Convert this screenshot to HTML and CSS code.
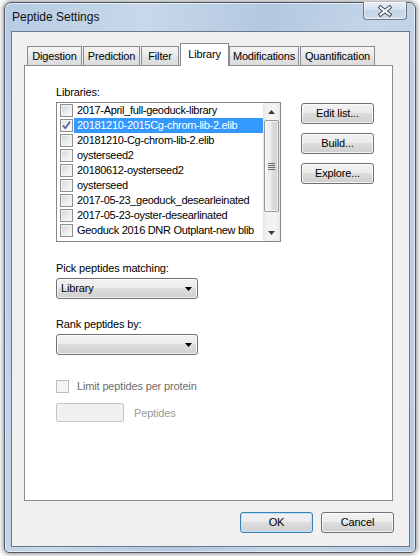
FILE: index.html
```html
<!DOCTYPE html>
<html>
<head>
<meta charset="utf-8">
<link rel="stylesheet" href="styles.css">
</head>
<body>
<div class="window">
  <div class="titlebar">
    <span class="title">Peptide Settings</span>
    <div class="close">
      <svg width="16" height="12" viewBox="0 0 16 12">
        <path d="M3.5 2.5 L12.5 9.5 M12.5 2.5 L3.5 9.5" stroke="#3b4858" stroke-width="4" stroke-linecap="square" fill="none"/>
        <path d="M3.5 2.5 L12.5 9.5 M12.5 2.5 L3.5 9.5" stroke="#ffffff" stroke-width="2" stroke-linecap="square" fill="none"/>
      </svg>
    </div>
  </div>
  <div class="client">
    <div class="tabs">
      <div class="tab t-dig">Digestion</div>
      <div class="tab t-pred">Prediction</div>
      <div class="tab t-filter">Filter</div>
      <div class="tab tab-active t-lib">Library</div>
      <div class="tab t-mod">Modifications</div>
      <div class="tab t-quant">Quantification</div>
    </div>
    <div class="panel">
      <div class="label lbl-libs">Libraries:</div>
      <div class="lib-row">
        <div class="listbox">
          <div class="items">
            <div class="item"><span class="cb"></span><span class="txt">2017-April_full-geoduck-library</span></div>
            <div class="item"><span class="cb cb-checked"><svg width="11" height="11" viewBox="0 0 11 11"><path d="M2 5.5 L4.3 8.3 L9 1.8" stroke="#4a5e8c" stroke-width="1.6" fill="none"/></svg></span><span class="txt selected">20181210-2015Cg-chrom-lib-2.elib</span></div>
            <div class="item"><span class="cb"></span><span class="txt">20181210-Cg-chrom-lib-2.elib</span></div>
            <div class="item"><span class="cb"></span><span class="txt">oysterseed2</span></div>
            <div class="item"><span class="cb"></span><span class="txt">20180612-oysterseed2</span></div>
            <div class="item"><span class="cb"></span><span class="txt">oysterseed</span></div>
            <div class="item"><span class="cb"></span><span class="txt">2017-05-23_geoduck_desearleinated</span></div>
            <div class="item"><span class="cb"></span><span class="txt">2017-05-23-oyster-desearlinated</span></div>
            <div class="item"><span class="cb"></span><span class="txt">Geoduck 2016 DNR Outplant-new blib</span></div>
          </div>
          <div class="scrollbar">
            <div class="sb-arrow"><svg width="7" height="4" viewBox="0 0 7 4"><path d="M0 4 L3.5 0 L7 4 Z" fill="#3c3c3c"/></svg></div>
            <div class="sb-thumb"><svg width="7" height="7" viewBox="0 0 7 7"><path d="M0 0.5 H7 M0 2.5 H7 M0 4.5 H7 M0 6.5 H7" stroke="#6a6a6a" stroke-width="1"/></svg></div>
            <div class="sb-space"></div>
            <div class="sb-arrow"><svg width="7" height="4" viewBox="0 0 7 4"><path d="M0 0 L3.5 4 L7 0 Z" fill="#3c3c3c"/></svg></div>
          </div>
        </div>
        <div class="side-buttons">
          <div class="btn">Edit list...</div>
          <div class="btn">Build...</div>
          <div class="btn">Explore...</div>
        </div>
      </div>
      <div class="label lbl-pick">Pick peptides matching:</div>
      <div class="combo"><span class="combo-text">Library</span><svg width="7" height="4" viewBox="0 0 7 4"><path d="M0 0 L3.5 4 L7 0 Z" fill="#000"/></svg></div>
      <div class="label lbl-rank">Rank peptides by:</div>
      <div class="combo"><span class="combo-text"></span><svg width="7" height="4" viewBox="0 0 7 4"><path d="M0 0 L3.5 4 L7 0 Z" fill="#000"/></svg></div>
      <div class="limit-row">
        <span class="cb cb-disabled"></span>
        <span class="limit-text">Limit peptides per protein</span>
      </div>
      <div class="peptides-row">
        <div class="textbox"></div>
        <span class="peptides-text">Peptides</span>
      </div>
    </div>
    <div class="footer">
      <div class="btn btn-default">OK</div>
      <div class="btn">Cancel</div>
    </div>
  </div>
</div>
</body>
</html>
```
FILE: styles.css
```css
html, body {
  margin: 0;
  padding: 0;
  background: #ffffff;
}
body {
  font-family: "Liberation Sans", Arial, sans-serif;
  font-size: 11px;
  letter-spacing: -0.15px;
  color: #000;
  height: 556px;
  overflow: hidden;
}
.window {
  margin: 2px 0 0 4px;
  width: 412px;
  height: 551px;
  box-sizing: border-box;
  border: 1px solid #4f5967;
  border-radius: 7px 7px 5px 5px;
  background: linear-gradient(100deg, #b6cbe3 0%, #c8d8ea 28%, #b3c8e0 52%, #c4d5e8 74%, #b7cce3 100%);
  box-shadow: 0 0 5px 1px rgba(0,0,0,0.45), inset 0 0 0 1px rgba(255,255,255,0.55);
  padding: 0 5px 5px 6px;
  display: flex;
  flex-direction: column;
}
.titlebar {
  height: 28px;
  flex: none;
  display: flex;
  justify-content: space-between;
  align-items: flex-start;
}
.title {
  font-family: "Liberation Sans", Arial, sans-serif;
  font-size: 12px;
  letter-spacing: 0;
  line-height: 15px;
  padding: 7px 0 0 1px;
  color: #111;
}
.close {
  width: 44px;
  height: 18px;
  box-sizing: border-box;
  margin: -1px 3px 0 0;
  border: 1px solid rgba(70,82,100,0.75);
  border-top: none;
  border-radius: 0 0 4px 4px;
  background: linear-gradient(#e7edf5 0%, #d6e1ee 45%, #c4d3e5 50%, #d0ddec 100%);
  box-shadow: inset 0 0 0 1px rgba(255,255,255,0.5);
  display: flex;
  align-items: center;
  justify-content: center;
}
.client {
  flex: 1;
  border: 1px solid #6b7888;
  background: #f0f0f0;
  padding: 11px 16px 0 12px;
  display: flex;
  flex-direction: column;
}
.tabs {
  display: flex;
  align-items: flex-end;
  height: 22px;
  padding-left: 3px;
  flex: none;
}
.tab {
  box-sizing: border-box;
  height: 19px;
  border: 1px solid #898c95;
  border-bottom: none;
  background: linear-gradient(#f4f4f4 0%, #ececec 45%, #e3e3e3 55%, #dcdcdc 100%);
  text-align: center;
  line-height: 18px;
  margin-left: 1px;
}
.t-dig { width: 55px; margin-left: 0; }
.t-pred { width: 57px; }
.t-filter { width: 38px; }
.t-lib { width: 49px; }
.t-mod { width: 70px; margin-left: 0; }
.t-quant { width: 75px; }
.tab-active {
  position: relative;
  z-index: 1;
  height: 23px;
  margin-bottom: -1px;
  background: #ffffff;
  line-height: 20px;
}
.panel {
  box-sizing: border-box;
  height: 436px;
  flex: none;
  border: 1px solid #898c95;
  background: #ffffff;
  padding: 0 0 0 31px;
  display: flex;
  flex-direction: column;
  align-items: flex-start;
}
.label {
  line-height: 13px;
}
.lbl-libs { margin: 20px 0 3px; }
.lbl-pick { margin: 20px 0 3px; }
.lbl-rank { margin: 19px 0 3px; }
.lib-row {
  display: flex;
  align-items: flex-start;
  gap: 20px;
}
.listbox {
  box-sizing: border-box;
  width: 225px;
  height: 140px;
  border: 1px solid #828790;
  display: flex;
  background: #fff;
}
.items {
  flex: 1;
  min-width: 0;
  display: flex;
  flex-direction: column;
}
.item {
  height: 15px;
  display: flex;
  align-items: center;
  padding-left: 3px;
}
.cb {
  box-sizing: border-box;
  width: 13px;
  height: 13px;
  flex: none;
  border: 1px solid #8e8f8f;
  background: linear-gradient(135deg, #d3d5d9 0%, #eeeeee 60%, #fbfbfb 100%);
  box-shadow: inset 0 0 0 1px #f4f4f4;
  display: flex;
  align-items: center;
  justify-content: center;
}
.cb-checked {
  background: linear-gradient(135deg, #e2e4e8 0%, #f4f4f4 60%, #ffffff 100%);
}
.txt {
  flex: 1;
  margin-left: 1px;
  padding: 0 3px;
  line-height: 15px;
  letter-spacing: -0.3px;
  white-space: nowrap;
  overflow: hidden;
}
.selected {
  background: #3399ff;
  color: #ffffff;
}
.scrollbar {
  width: 17px;
  flex: none;
  display: flex;
  flex-direction: column;
  align-items: center;
  background: linear-gradient(to right, #e6e6e6 0%, #f2f2f2 25%, #f2f2f2 75%, #e6e6e6 100%);
}
.sb-arrow {
  height: 17px;
  width: 17px;
  flex: none;
  display: flex;
  align-items: center;
  justify-content: center;
}
.sb-thumb {
  box-sizing: border-box;
  width: 15px;
  height: 92px;
  flex: none;
  border: 1px solid #979797;
  border-radius: 2px;
  background: linear-gradient(to right, #f4f4f4 0%, #ececec 45%, #dcdcdc 55%, #d2d2d2 100%);
  box-shadow: inset 0 0 0 1px rgba(255,255,255,0.7);
  display: flex;
  align-items: center;
  justify-content: center;
}
.sb-space {
  flex: 1;
}
.side-buttons {
  display: flex;
  flex-direction: column;
  gap: 9px;
  padding-top: 1px;
}
.btn {
  box-sizing: border-box;
  width: 73px;
  height: 21px;
  border: 1px solid #707070;
  border-radius: 3px;
  background: linear-gradient(#f2f2f2 0%, #ebebeb 49%, #dddddd 50%, #cfcfcf 100%);
  box-shadow: inset 0 0 0 1px rgba(255,255,255,0.75);
  text-align: center;
  line-height: 19px;
}
.btn-default {
  border-color: #3c7fb1;
  box-shadow: inset 0 0 0 1px #b8e3f8;
}
.combo {
  box-sizing: border-box;
  width: 142px;
  height: 21px;
  border: 1px solid #707070;
  border-radius: 3px;
  background: linear-gradient(#f2f2f2 0%, #ebebeb 49%, #dddddd 50%, #cfcfcf 100%);
  box-shadow: inset 0 0 0 1px rgba(255,255,255,0.75);
  display: flex;
  align-items: center;
  padding: 0 5px 0 4px;
}
.combo-text {
  flex: 1;
  line-height: 19px;
}
.limit-row {
  margin-top: 25px;
  display: flex;
  align-items: center;
  height: 13px;
}
.cb-disabled {
  border-color: #bcbcbc;
  background: #f4f4f4;
  box-shadow: none;
}
.limit-text {
  margin-left: 8px;
  color: #6d6d6d;
  line-height: 13px;
}
.peptides-row {
  margin-top: 10px;
  display: flex;
  align-items: center;
}
.textbox {
  box-sizing: border-box;
  width: 68px;
  height: 19px;
  border: 1px solid #c3c6ca;
  border-radius: 2px;
  background: #f0f0f0;
}
.peptides-text {
  margin-left: 10px;
  color: #9a9a9a;
}
.footer {
  display: flex;
  justify-content: flex-end;
  gap: 8px;
  margin: 11px -1px 0 0;
}
```
